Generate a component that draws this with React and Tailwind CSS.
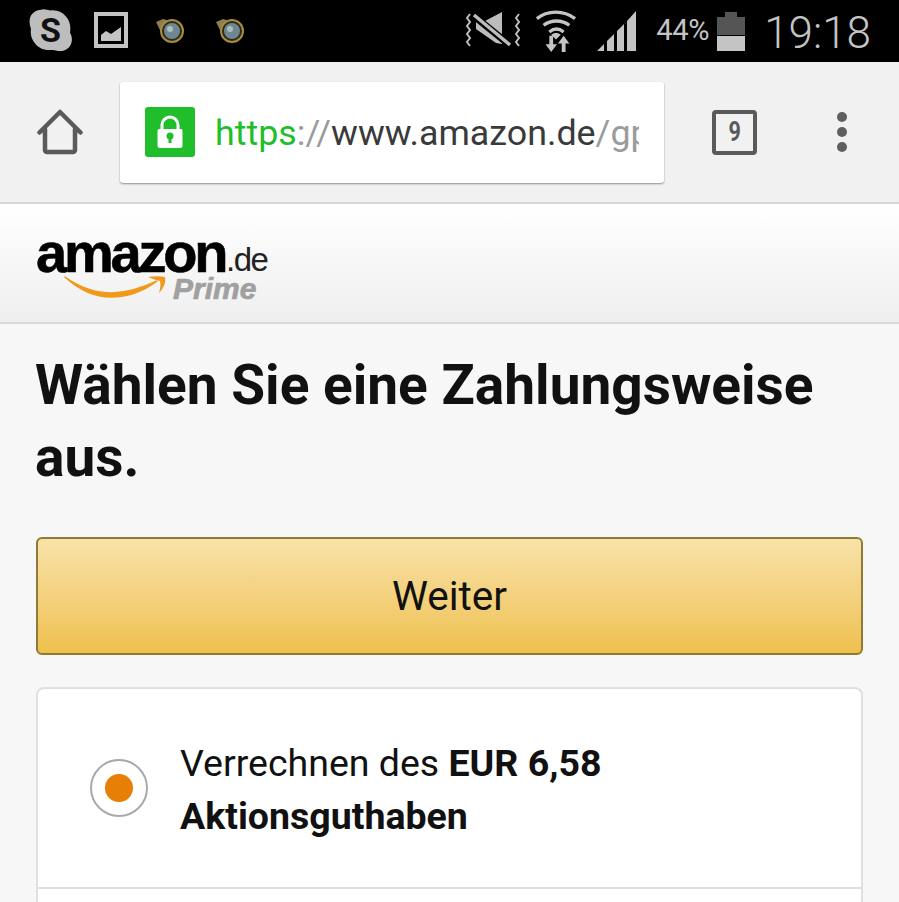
// App.jsx
const SkypeIcon = () => (
  <svg width="44" height="44" viewBox="0 0 44 44">
    <path d="M11 1c4-1.500 7 0 10 .5 6-1 12 1 16 6 4 5 5 10 4 16 1.500 3 2.500 6 1.500 10-1.500 6-7 9-12 8.500-3 0-5-1.500-8-1-6 .5-12-1-16-6-4-4-5.500-10-4.500-15C1 17 0 13 1 9c1-4 4.500-7 9-8z" fill="#bdbdbd" />
    <text x="21.500" y="33" textAnchor="middle" fontSize="34" fontWeight="700" fill="#111" fontFamily="Roboto, sans-serif">S</text>
  </svg>
);

const PictureIcon = () => (
  <svg width="34" height="38" viewBox="0 0 34 38">
    <rect x="2" y="2" width="30" height="32" fill="none" stroke="#c4c4c4" strokeWidth="4" />
    <path d="M7 29v-6l5-4 5 3 10-7v14z" fill="#c4c4c4" />
  </svg>
);

const LensIcon = () => (
  <svg width="30" height="28" viewBox="0 0 30 28">
    <path d="M1 5l7-3 7 2-4 14-5-3z" fill="#8d7b52" />
    <circle cx="17" cy="14" r="11" fill="#2b2b22" stroke="#a98b3c" strokeWidth="2" />
    <circle cx="17" cy="14" r="8" fill="#6f8790" />
    <circle cx="15" cy="12" r="3" fill="#aebdc2" />
  </svg>
);

const MuteIcon = () => (
  <svg width="60" height="38" viewBox="0 0 60 38">
    <g fill="none" stroke="#bdbdbd" strokeWidth="2">
      <path d="M6 2l-3 4 3 4-3 4 3 4-3 4 3 4-3 4 3 4" />
      <path d="M55 2l-3 4 3 4-3 4 3 4-3 4 3 4-3 4 3 4" />
    </g>
    <path d="M12 9h9l17-9v32l-6-1-20-14z" fill="#bdbdbd" />
    <path d="M10 4l37 30" stroke="#000" strokeWidth="7" />
    <path d="M10 3l36 30" stroke="#bdbdbd" strokeWidth="3.500" />
  </svg>
);

const WifiIcon = () => (
  <svg width="42" height="46" viewBox="0 0 44 46">
    <g fill="none" stroke="#c4c4c4" strokeWidth="3.500">
      <path d="M2 10C13 1 30 1 42 10" />
      <path d="M9 17c8-6 19-6 27 0" />
      <path d="M15 24c5-4 10-4 15 0" />
    </g>
    <path d="M22 32l-5-5c3-2.500 7-2.500 10 0z" fill="#c4c4c4" />
    <path d="M15 28h4v9h4l-6 8-6-8h4z" fill="#c4c4c4" />
    <path d="M28 45h4v-9h4l-6-8-6 8h4z" fill="#c4c4c4" />
  </svg>
);

const SignalIcon = () => (
  <svg width="42" height="42" viewBox="0 0 42 42">
    <path d="M1 41l7-7v7zM11 41V31l7-7v17zM21 41V21l7-7v27zM31 41V11l9-10v40z" fill="#c4c4c4" />
  </svg>
);

const BatteryIcon = () => (
  <div className="flex w-[28px] flex-col items-center">
    <div className="h-[5px] w-[12px] bg-[#555555]" />
    <div className="h-[18px] w-full bg-[#555555]" />
    <div className="h-[15px] w-full bg-[#c4c4c4] mt-[1px]" />
  </div>
);

const StatusBar = () => (
  <div className="flex h-[62px] items-center bg-black pl-[29px] pr-[28px] text-[#c4c4c4]">
    <div className="flex items-center">
      <SkypeIcon />
      <div className="ml-[21px]"><PictureIcon /></div>
      <div className="ml-[27px]"><LensIcon /></div>
      <div className="ml-[30px]"><LensIcon /></div>
    </div>
    <div className="ml-auto flex items-center">
      <MuteIcon />
      <div className="ml-[11px]"><WifiIcon /></div>
      <div className="ml-[19px]"><SignalIcon /></div>
      <span className="ml-[18px] text-[29px] tracking-[-0.3px]">44%</span>
      <div className="ml-[8px]"><BatteryIcon /></div>
      <span className="ml-[19px] pt-[3px] text-[44px] font-light leading-none">19:18</span>
    </div>
  </div>
);

const Toolbar = () => (
  <div className="flex h-[142px] items-center border-b-2 border-[#d6d6d6] bg-[#f1f1f1]">
    <svg className="ml-[37px] shrink-0" width="46" height="46" viewBox="0 0 46 46">
      <path d="M2.500 23.500L23 3l20.500 20.500M8 20v21a2 2 0 0 0 2 2h26a2 2 0 0 0 2-2V20" fill="none" stroke="#5a5a5a" strokeWidth="4.500" strokeLinejoin="round" strokeLinecap="round" />
    </svg>
    <div className="ml-[37px] flex h-[101px] w-[544px] shrink-0 items-center overflow-hidden rounded-[3px] bg-white pl-[25px] shadow-[0_1px_2px_rgba(0,0,0,0.4)]">
      <div className="flex h-[50px] w-[50px] shrink-0 items-center justify-center rounded-[3px] bg-[#1fbe2a]">
        <svg width="26" height="34" viewBox="0 0 26 34">
          <path d="M5 14V10a8 8 0 0 1 16 0v4" fill="none" stroke="#fff" strokeWidth="3" />
          <path d="M2 14h22a1.500 1.500 0 0 1 1.500 1.500v15A2.500 2.500 0 0 1 23 33H3a2.500 2.500 0 0 1-2.500-2.500v-15A1.500 1.500 0 0 1 2 14z" fill="#fff" />
          <circle cx="13" cy="21" r="3.500" fill="#1fbe2a" />
          <rect x="11.500" y="22" width="3" height="6" fill="#1fbe2a" />
        </svg>
      </div>
      <div className="ml-[20px] w-[424px] shrink-0 overflow-hidden whitespace-nowrap pt-[4px] font-['Roboto',sans-serif] text-[35.8px] leading-none">
        <span className="text-[#1fbe2a]">https</span>
        <span className="text-[#9b9b9b]">://</span>
        <span className="text-[#3a3a3a]">www.amazon.de</span>
        <span className="text-[#9b9b9b]">/gp/buy</span>
      </div>
    </div>
    <div className="ml-[48px] flex h-[45px] w-[45px] shrink-0 items-center justify-center rounded-[4px] border-[4px] border-[#5a5a5a] font-['Roboto',sans-serif] text-[27px] font-bold leading-none text-[#5a5a5a]">
      <span className="scale-x-[0.8]">9</span>
    </div>
    <div className="ml-[80px] flex shrink-0 flex-col gap-[5px]">
      <div className="h-[10px] w-[10px] rounded-full bg-[#5f5f5f]" />
      <div className="h-[10px] w-[10px] rounded-full bg-[#5f5f5f]" />
      <div className="h-[10px] w-[10px] rounded-full bg-[#5f5f5f]" />
    </div>
  </div>
);

const Logo = () => (
  <div className="relative h-[70px] w-[236px]">
    <span className="absolute left-[-1px] top-[-7px] font-['Liberation_Sans',sans-serif] text-[56px] font-bold leading-[64px] tracking-[-3.2px] text-black [-webkit-text-stroke:0.6px_#000]">
      amazon
    </span>
    <span className="absolute left-[189px] top-[10px] font-['Liberation_Sans',sans-serif] text-[33px] leading-[44px] tracking-[-1.5px] text-[#222222]">
      .de
    </span>
    <svg className="absolute left-[27px] top-[46px]" width="104" height="26" viewBox="0 0 104 26">
      <path d="M1 3c14 10 30 16 47 16 16 0 30-5 45-12-13 10-29 16-46 16C30 23 14 15 1 3z" fill="#f09a1c" stroke="#f09a1c" strokeWidth="1.500" strokeLinejoin="round" />
      <path d="M84 3c6-1 12-1 17 0 1 5-1 11-6 16 1-4 2-8 1-12-3-1-8-2-12-4z" fill="#f09a1c" />
    </svg>
    <span className="absolute left-[136px] top-[41px] font-['Liberation_Sans',sans-serif] text-[30px] font-bold italic leading-[40px] text-[#a0a0a0] [-webkit-text-stroke:0.7px_#a0a0a0]">
      Prime
    </span>
  </div>
);

const Header = () => (
  <div className="flex h-[120px] items-center border-b-2 border-[#d9d9d9] bg-gradient-to-b from-white to-[#efefef] pl-[37px]">
    <Logo />
  </div>
);

const PaymentCard = () => (
  <div className="mt-[32px] rounded-t-[8px] border-2 border-b-0 border-[#e0e0e0] bg-white">
    <div className="flex h-[200px] items-center border-b-2 border-[#dedede] pl-[52px]">
      <div className="flex h-[58px] w-[58px] shrink-0 items-center justify-center rounded-full border-2 border-[#a9a9a9] bg-white">
        <div className="h-[28px] w-[28px] rounded-full bg-[#e77e05]" />
      </div>
      <p className="ml-[32px] pt-[4px] text-[37.5px] leading-[53px] text-[#111111]">
        Verrechnen des <b>EUR 6,58</b>
        <br />
        <b>Aktionsguthaben</b>
      </p>
    </div>
    <div className="h-[20px]" />
  </div>
);

export default function App() {
  return (
    <div className="h-[902px] w-[899px] overflow-hidden bg-[#f7f7f7] font-['Roboto',sans-serif]">
      <StatusBar />
      <Toolbar />
      <Header />
      <div className="px-[36px]">
        <h1 className="mt-[25px] ml-[-1px] text-[55px] font-bold leading-[72px] text-[#111111]">
          Wählen Sie eine Zahlungsweise aus.
        </h1>
        <button className="mt-[44px] flex h-[118px] w-full items-center justify-center rounded-[6px] border-2 border-[#8f7a38] bg-gradient-to-b from-[#f7e2a7] to-[#efc04c] text-[40.5px] text-[#111111]">
          Weiter
        </button>
        <PaymentCard />
      </div>
    </div>
  );
}
